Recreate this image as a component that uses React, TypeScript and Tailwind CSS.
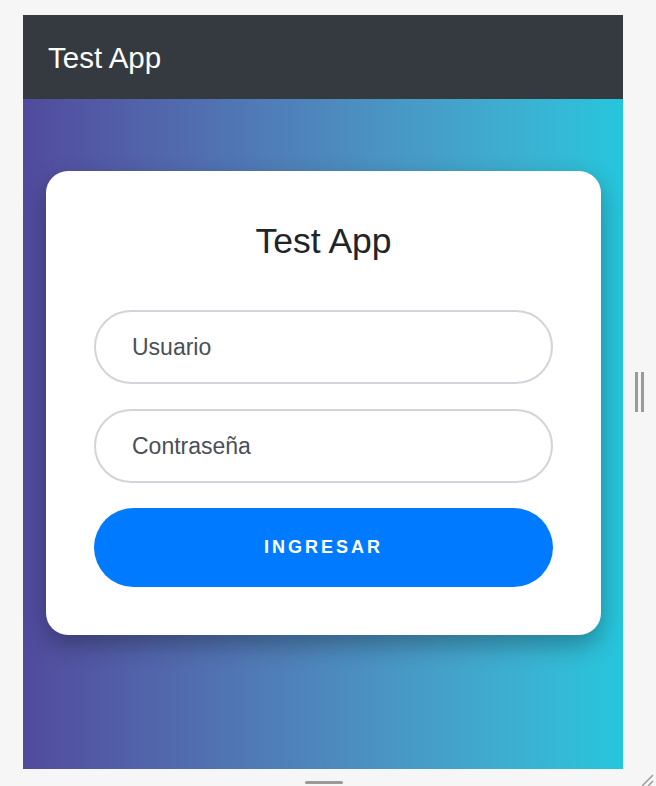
import { useState } from 'react'

const font = { fontFamily: '"Liberation Sans", Arial, sans-serif' }

export default function App() {
  const [form, setForm] = useState({ user: '', pass: '' })

  return (
    <div className="relative h-[786px] w-[656px] overflow-hidden bg-[#f6f6f6]" style={font}>
      <div className="flex pt-[15px]">
        <div className="ml-[23px] w-[600px]">
          <header className="flex h-[84px] items-center bg-[#343a40] px-[25px]">
            <h1 className="pt-[2px] text-[29.5px] leading-none text-white">Test App</h1>
          </header>
          <main className="h-[670px] bg-gradient-to-r from-[#514a9d] to-[#24c6dc] pt-[72px] pr-[22px] pl-[23px]">
            <div className="rounded-[22px] bg-white px-[48px] pt-[50px] pb-[48px] shadow-[0_10px_25px_rgba(0,0,0,0.3)]">
              <h2 className="mb-[49px] text-center text-[35.5px] leading-[40px] text-[#212529]">
                Test App
              </h2>
              <form className="flex flex-col gap-[25px]" onSubmit={(e) => e.preventDefault()}>
                <input
                  value={form.user}
                  onChange={(e) => setForm((f) => ({ ...f, user: e.target.value }))}
                  placeholder="Usuario"
                  className="h-[74px] w-full rounded-full border-2 border-[#d3d3db] bg-white px-[36px] text-[23px] text-[#495057] outline-none placeholder:text-[#495057]"
                />
                <input
                  type="password"
                  value={form.pass}
                  onChange={(e) => setForm((f) => ({ ...f, pass: e.target.value }))}
                  placeholder="Contraseña"
                  className="h-[74px] w-full rounded-full border-2 border-[#d3d3db] bg-white px-[36px] text-[23px] text-[#495057] outline-none placeholder:text-[#495057]"
                />
                <button
                  type="submit"
                  className="h-[79px] w-full rounded-full bg-[#007bff] text-[18px] font-bold tracking-[3px] text-white"
                >
                  INGRESAR
                </button>
              </form>
            </div>
          </main>
        </div>
        <div className="flex flex-1 items-center justify-center pr-[1px]">
          <div className="flex h-[40px] gap-[3px]">
            <div className="w-[3px] bg-[#9a9a9a]" />
            <div className="w-[3px] bg-[#9a9a9a]" />
          </div>
        </div>
      </div>
      <div className="flex justify-center pt-[12px] pr-[8px]">
        <div className="h-[3px] w-[38px] rounded-full bg-[#9a9a9a]" />
      </div>
      <svg className="absolute right-[2px] bottom-0" width="16" height="14" viewBox="0 0 16 14">
        <line x1="4" y1="14" x2="15" y2="3" stroke="#9a9a9a" strokeWidth="1.5" />
        <line x1="10" y1="14" x2="15" y2="9" stroke="#9a9a9a" strokeWidth="1.5" />
      </svg>
    </div>
  )
}
